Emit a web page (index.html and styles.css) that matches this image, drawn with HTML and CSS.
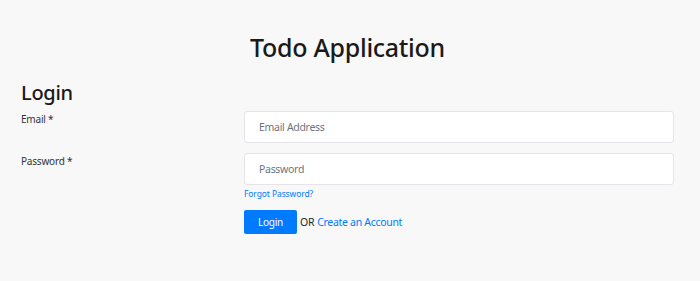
FILE: index.html
```html
<!DOCTYPE html>
<html>
<head>
<meta charset="utf-8">
<link rel="stylesheet" href="styles.css">
</head>
<body>
<div class="page">
  <h1 class="title">Todo Application</h1>
  <h2 class="heading">Login</h2>
  <form class="form">
    <div class="row">
      <label class="label">Email *</label>
      <div class="field"><input class="input" type="email" placeholder="Email Address"></div>
    </div>
    <div class="row">
      <label class="label">Password *</label>
      <div class="field">
        <input class="input" type="password" placeholder="Password">
        <a class="forgot" href="#">Forgot Password?</a>
      </div>
    </div>
    <div class="row">
      <div></div>
      <div class="actions">
        <button class="btn" type="button">Login</button>
        <span class="or">OR</span>
        <a class="create" href="#">Create an Account</a>
      </div>
    </div>
  </form>
</div>
</body>
</html>
```
FILE: styles.css
```css
html, body {
  margin: 0;
  padding: 0;
  background: #f8f8f8;
}
body {
  font-family: "Noto Sans", "Open Sans", sans-serif;
  color: #212529;
  width: 700px;
  height: 281px;
  overflow: hidden;
}
.page {
  padding: 30px 26px 0 21px;
}
.title {
  margin: 0;
  text-align: center;
  font-size: 25px;
  font-weight: 500;
  letter-spacing: -0.3px;
  line-height: 34px;
  color: #1a1a1a;
}
.heading {
  margin: 16px 0 0;
  font-size: 20px;
  font-weight: 500;
  letter-spacing: -0.3px;
  line-height: 26px;
  color: #1a1a1a;
}
.form {
  display: flex;
  flex-direction: column;
  gap: 10px;
  margin-top: 5px;
}
.row {
  display: grid;
  grid-template-columns: 223px 1fr;
}
.label {
  font-size: 10px;
  letter-spacing: -0.2px;
  line-height: 14px;
  padding-top: 1px;
  color: #333;
}
.field {
  display: flex;
  flex-direction: column;
}
.input {
  box-sizing: border-box;
  height: 32px;
  border: 1px solid #e4e4ea;
  border-radius: 3px;
  background: #fff;
  padding: 0 14px;
  font-family: inherit;
  font-size: 10.5px;
  letter-spacing: -0.3px;
  color: #495057;
  outline: none;
}
.input::placeholder {
  color: #6c757d;
}
.forgot {
  margin-top: 3px;
  font-size: 8.5px;
  letter-spacing: -0.1px;
  line-height: 12px;
  color: #007bff;
  text-decoration: none;
}
.actions {
  display: flex;
  align-items: center;
  gap: 3px;
}
.btn {
  width: 53px;
  height: 24px;
  border: none;
  border-radius: 2px;
  background: #007bff;
  color: #fff;
  font-family: inherit;
  font-size: 10px;
  letter-spacing: -0.2px;
  padding: 0;
}
.or {
  font-size: 10.5px;
  letter-spacing: -0.3px;
  color: #212529;
}
.create {
  font-size: 10.5px;
  letter-spacing: -0.3px;
  color: #007bff;
  text-decoration: none;
}
```
